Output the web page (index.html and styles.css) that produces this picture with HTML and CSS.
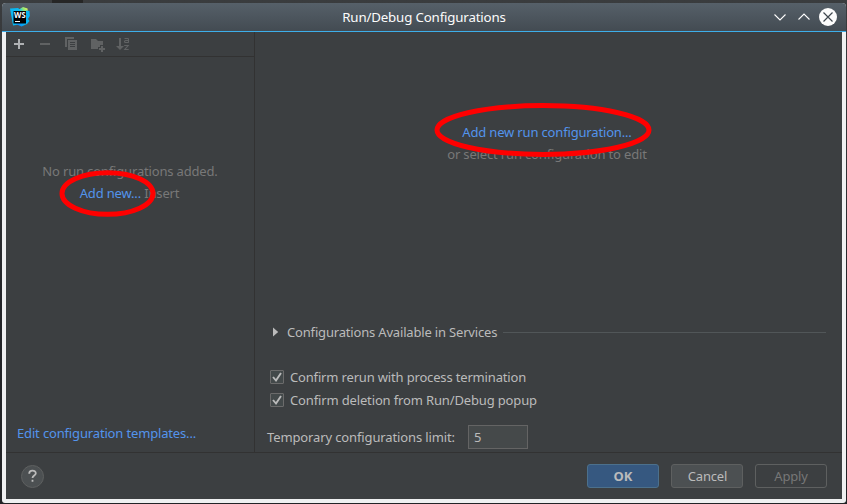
FILE: index.html
```
<!DOCTYPE html>
<html lang="en">
<head>
<meta charset="utf-8">
<title>Run/Debug Configurations</title>
<link rel="stylesheet" href="styles.css">
</head>
<body>
<div class="window">
  <header class="titlebar">
    <svg class="logo" width="20" height="20" viewBox="0 0 20 20">
      <defs>
        <linearGradient id="ws" x1="0" y1="1" x2="1" y2="0"><stop offset="0" stop-color="#087cfa"/><stop offset=".55" stop-color="#07c3f2"/><stop offset=".75" stop-color="#8fe77c"/><stop offset="1" stop-color="#fcf84a"/></linearGradient>
      </defs>
      <path fill="#0ab8f2" d="M0 1.500 8 1l4 3v13l-9 1.500z"/>
      <path fill="url(#ws)" d="M8 3 13 0l4.500 1.500L18 8l-1 9-5.500 2.500L6 17z"/>
      <path fill="#07b3f2" d="m16 3.500 3.500.500.300 5-1.800 3 1.500 2-2.500 3h-1z"/>
      <path fill="#000" d="M3.500 4h12.500v12.500H3.500z"/>
      <path fill="#fff" d="M5 14h5v1H5z"/>
      <text class="logo-text" x="4" y="11" textLength="11.600" lengthAdjust="spacingAndGlyphs">WS</text>
    </svg>
    <h1>Run/Debug Configurations</h1>
    <svg class="controls" width="64" height="20" viewBox="0 0 64 20" fill="none">
      <path stroke="#fcfcfc" stroke-width="1.100" d="m1.500 7.500 5.500 5.500 5.500-5.500M25.500 12.500l5.500-5.500 5.500 5.500"/>
      <circle cx="55" cy="10" r="9" fill="#fcfcfc"/>
      <path stroke="#3f474e" stroke-width="1.200" d="m50.500 5.500 9 9m0-9-9 9"/>
    </svg>
  </header>
  <div class="content">
    <main class="panes">
      <aside class="sidebar">
        <div class="toolbar">
          <svg width="16" height="16" viewBox="0 0 16 16"><path fill="#afb1b3" d="M7 3h2v4h4v2H9v4H7V9H3V7h4z"/></svg>
          <svg width="16" height="16" viewBox="0 0 16 16"><path fill="#606263" d="M3 7h10v2H3z"/></svg>
          <svg width="16" height="16" viewBox="0 0 16 16"><path fill="#606263" d="M2 1h9v2H4v8H2z"/><path fill="#606263" fill-rule="evenodd" d="M5 4h9v10H5zm2 2v1h5V6zm0 2v1h5V8zm0 2v1h5v-1z"/></svg>
          <svg width="16" height="16" viewBox="0 0 16 16"><path fill="#606263" d="M2 3h5l2 2h5v4h-3v2H9v2H2z"/><path fill="#606263" d="M12 10h2v2h2v2h-2v2h-2v-2h-2v-2h2z"/></svg>
          <svg width="16" height="16" viewBox="0 0 16 16"><path fill="#606263" d="M4 2h2v8h3l-4 4-4-4h3z"/><path fill="none" stroke="#606263" stroke-width="1.100" d="M9.500 2.500h3.200q.8 0 .8.800v3.500M13.500 6.500h-3q-1 0-1-1t1-1h3M9.200 9.500h4l-3.500 4h4"/></svg>
        </div>
        <div class="empty">
          <p>No run configurations added.</p>
          <p class="second"><a>Add new...</a> Insert</p>
          <svg class="mark mark-small" width="98" height="48" viewBox="0 0 98 48"><ellipse cx="48.500" cy="23.500" rx="45.500" ry="20.800"/></svg>
        </div>
        <a class="templates">Edit configuration templates...</a>
      </aside>
      <section class="details">
        <div class="hint">
          <p><a>Add new run configuration...</a></p>
          <p>or select run configuration to edit</p>
          <svg class="mark mark-large" width="220" height="56" viewBox="0 0 220 56"><ellipse cx="110" cy="28" rx="106" ry="24.400"/></svg>
        </div>
        <div class="services">
          <svg width="6" height="10" viewBox="0 0 6 10"><path fill="#bbb" d="M0 .500v9L5.200 5z"/></svg>
          <span>Configurations Available in Services</span>
          <i class="rule"></i>
        </div>
        <div class="option first"><span class="check"><svg width="12" height="12" viewBox="0 0 12 12"><path d="m2 6 3 3.500L10 2"/></svg></span>Confirm rerun with process termination</div>
        <div class="option"><span class="check"><svg width="12" height="12" viewBox="0 0 12 12"><path d="m2 6 3 3.500L10 2"/></svg></span>Confirm deletion from Run/Debug popup</div>
        <div class="limit"><span class="limit-label">Temporary configurations limit:</span><span class="field">5</span></div>
      </section>
    </main>
    <footer class="footer">
      <span class="help"><svg width="12" height="14" viewBox="0 0 12 14"><path d="M2.200 4.700C2.200.700 8.800.900 8.800 4.200c0 2.300-3.300 2.400-3.300 4.900M5.500 10.700v2"/></svg></span>
      <div class="buttons">
        <span class="btn ok">OK</span>
        <span class="btn cancel">Cancel</span>
        <span class="btn apply">Apply</span>
      </div>
    </footer>
  </div>
</div>
</body>
</html>
```
FILE: styles.css
```
* { box-sizing: border-box; }
body {
  margin: 0;
  height: 504px;
  padding: 3px 1px 1px 2px;
  overflow: hidden;
  background: linear-gradient(90deg, transparent 52px, #262626 52px, #262626 83px, transparent 83px) 0 0 / 100% 3px no-repeat, linear-gradient(#3a3c3e 0, #303234 35%, #232428 60%, #222326);
  color: #bbb;
  font: 13px/18px "Noto Sans", sans-serif;
  letter-spacing: -0.165px;
}
p, h1 { margin: 0; }
a { color: #5394ec; }
.window {
  display: flex;
  flex-direction: column;
  height: 500px;
  border-radius: 4px 4px 3px 3px;
  overflow: hidden;
  background: #eff0f1;
}
.titlebar {
  display: flex;
  align-items: center;
  height: 29px;
  flex: none;
  padding: 0 9px 0 8px;
  border-bottom: 1px solid #3daee9;
  background: linear-gradient(#566069, #434b52);
}
.logo { flex: none; margin-right: 45px; }
.logo-text { font: bold 8.500px "Noto Sans", sans-serif; letter-spacing: 0; fill: #fff; }
.titlebar h1 {
  flex: 1;
  text-align: center;
  font-size: 13.300px;
  font-weight: 400;
  color: #fcfcfc;
}
.controls { flex: none; }
.content {
  display: flex;
  flex-direction: column;
  flex: 1;
  margin: 0 4px 4px;
  background: #3c3f41;
}
.panes { display: flex; height: 421px; border-bottom: 1px solid #323232; }
.sidebar {
  display: flex;
  flex-direction: column;
  width: 249px;
  border-right: 1px solid #323232;
}
.toolbar {
  display: flex;
  align-items: center;
  gap: 10px;
  height: 25px;
  padding-left: 5px;
  border-bottom: 1px solid #323232;
}
.empty { position: relative; padding-top: 105px; text-align: center; color: #787878; }
.second { margin-top: 4px; padding-right: 1px; }
.mark { position: absolute; fill: none; stroke: #f00; stroke-width: 5px; }
.mark-small { left: 53px; top: 113px; }
.mark-large { left: 178px; top: 70px; }
.templates { margin: auto 0 10px 11px; letter-spacing: -0.155px; }
.details { flex: 1; display: flex; flex-direction: column; }
.hint { position: relative; height: 291px; padding: 91px 3px 0 0; text-align: center; color: #787878; }
.hint p + p { margin-top: 4px; letter-spacing: -0.155px; }
.services { display: flex; align-items: center; height: 18px; padding: 0 16px 0 18px; }
.services span { margin-left: 8px; letter-spacing: -0.175px; }
.rule { flex: 1; height: 1px; margin-left: 6px; background: #515658; }
.option { display: flex; align-items: center; height: 18px; margin: 5px 0 0 15px; letter-spacing: -0.145px; }
.option.first { margin-top: 27px; letter-spacing: -0.165px; }
.check {
  width: 14px;
  height: 14px;
  margin-right: 6px;
  border: 1px solid #6b6b6b;
  border-radius: 1px;
  background: #43494a;
}
.check svg { display: block; }
.check path { fill: none; stroke: #bbb; stroke-width: 1.900; }
.limit { display: flex; align-items: center; height: 24px; margin: 16px 0 0 12px; }
.limit-label { width: 201px; letter-spacing: -0.125px; }
.field {
  width: 60px;
  height: 24px;
  padding: 2px 5px;
  border: 1px solid #646464;
  background: #45494a;
}
.footer {
  flex: 1;
  display: flex;
  align-items: center;
  justify-content: space-between;
  padding: 0 15px;
}
.help {
  display: flex;
  align-items: center;
  justify-content: center;
  width: 23px;
  height: 23px;
  border: 1px solid #5e6060;
  border-radius: 50%;
  background: #4c5052;
}
.help path { fill: none; stroke: #bbb; stroke-width: 1.800; }
.buttons { display: flex; gap: 12px; }
.btn {
  width: 72px;
  height: 24px;
  border: 1px solid #5e6060;
  border-radius: 3px;
  background: #4c5052;
  text-align: center;
  line-height: 23px;
}
.cancel { padding-left: 1px; }
.ok { border-color: #4c708c; background: #365880; font-weight: 700; letter-spacing: 0; }
.apply { background: transparent; color: #777; }
```
